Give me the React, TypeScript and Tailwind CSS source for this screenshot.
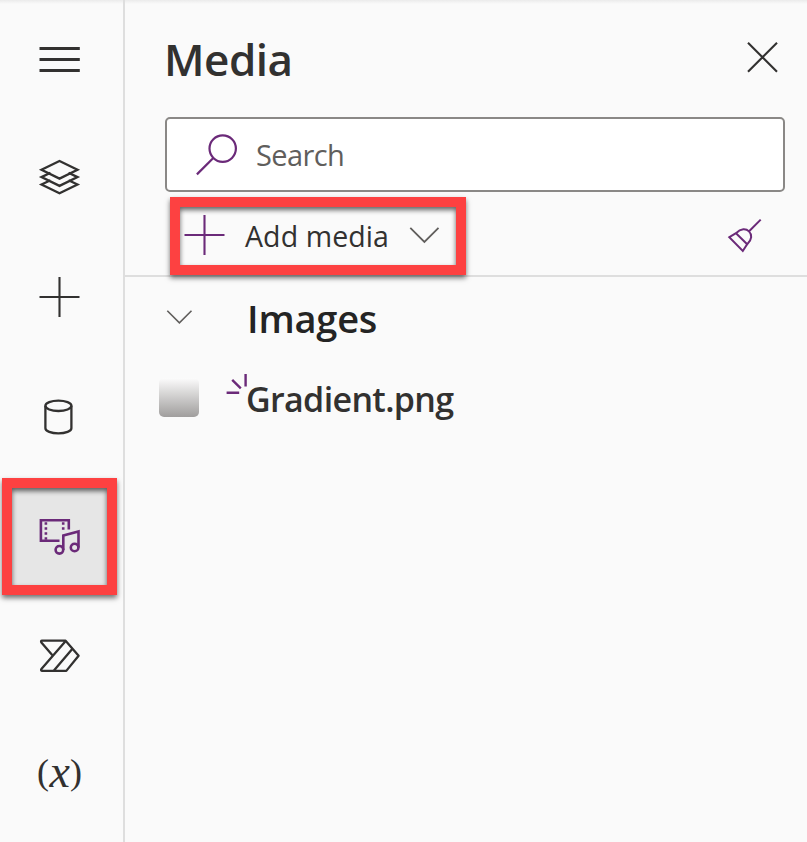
import type { ReactNode } from "react";

const INK = "#323130";
const PURPLE = "#6b2a79";

const highlight =
  "border-[10px] border-[#fd4141] shadow-[0_3px_5px_rgba(0,0,0,0.55),inset_0_3px_5px_rgba(0,0,0,0.6)]";

function RailIcon({ top, height, children }: { top: number; height: number; children: ReactNode }) {
  return (
    <svg
      className="block shrink-0"
      width={123}
      height={height}
      viewBox={`0 ${top} 123 ${height}`}
      fill="none"
      stroke={INK}
      strokeWidth={2.3}
    >
      {children}
    </svg>
  );
}

function Rail() {
  return (
    <nav className="flex w-[125px] shrink-0 flex-col border-r-2 border-[#dedede]">
      <RailIcon top={0} height={118}>
        <path d="M39.5 48.5h40.3M39.5 59.5h40.3M39.5 70.5h40.3" strokeWidth={3} />
      </RailIcon>
      <RailIcon top={118} height={120}>
        <path d="M59.5 161l18 8.8-18 8.8-18-8.8z" />
        <path d="M50.5 172.8l-9 4.3 18 8.8 18-8.8-9-4.3M50.5 180.2l-9 4.3 18 8.8 18-8.8-9-4.3" />
      </RailIcon>
      <RailIcon top={238} height={120}>
        <path d="M39.5 297h40M59.5 277v40" strokeWidth={2.1} />
      </RailIcon>
      <RailIcon top={358} height={120}>
        <ellipse cx="58.4" cy="405.8" rx="13" ry="5.2" />
        <path d="M45.4 405.8v22.4c0 2.9 5.8 5.2 13 5.2s13-2.3 13-5.2v-22.4" />
      </RailIcon>
      <button className={`ml-[2px] flex h-[117px] w-[115px] shrink-0 bg-[#e6e6e6] ${highlight}`}>
        <svg width={95} height={97} viewBox="12 488 95 97" fill="none" stroke={PURPLE} strokeWidth={2.6}>
          <path d="M59.5 540.7H40.9v-20.4h27.9v9.3" />
          <path d="M45.9 522.2v18M63.2 522.2v8" strokeDasharray="2.6 2.4" />
          <circle cx="59.4" cy="549.8" r="3.8" />
          <circle cx="74.6" cy="547.5" r="3.8" />
          <path d="M63.3 550v-14.6l15.2-4v16.2" />
        </svg>
      </button>
      <RailIcon top={595} height={121}>
        <path
          d="M42 640.7h23.6L78.6 655.7 66.3 670.9H42.2c-1 0-1.5-1.1-.8-1.9l24.3-28M52.4 655.2L41.4 642.4c-.7-.8-.3-1.7.6-1.7M53.5 670.9l18.3-21.5"
          strokeLinejoin="round"
        />
      </RailIcon>
      <RailIcon top={716} height={126}>
        <g fill={INK} stroke="none" fontFamily="'Liberation Serif', serif">
          <text x="37" y="784.2" fontSize="36">(</text>
          <text x="49.4" y="787" fontSize="46" fontStyle="italic">x</text>
          <text x="70" y="784.2" fontSize="36">)</text>
        </g>
      </RailIcon>
    </nav>
  );
}

function Header() {
  return (
    <header className="flex h-[117px] justify-between pr-[28px] pl-[39px]">
      <h1 className="mt-[29px] text-[44px] leading-[60px] font-semibold tracking-[-0.5px] text-[#323130]">Media</h1>
      <svg className="mt-[41px]" width={34} height={34} viewBox="745 41 34 34" stroke={INK} strokeWidth={2.1}>
        <path d="M748 42.7l29 29M777 42.7l-29 29" />
      </svg>
    </header>
  );
}

function SearchBox() {
  return (
    <div className="ml-[40px] flex h-[75px] w-[620px] items-center rounded-[5px] border-2 border-[#8a8886] bg-white">
      <svg className="ml-[28px]" width={44} height={44} viewBox="195 133 44 44" fill="none" stroke={PURPLE} strokeWidth={2.2}>
        <circle cx="222.7" cy="148.6" r="13.2" />
        <path d="M213.3 158l-16.4 16.4" />
      </svg>
      <span className="ml-[17px] text-[29px] leading-[40px] tracking-[-0.6px] text-[#605e5c]">Search</span>
    </div>
  );
}

function Toolbar() {
  return (
    <div className="flex h-[85px] border-b-2 border-[#dedede]">
      <button className={`mt-[5px] ml-[45px] flex h-[78px] w-[296px] shrink-0 ${highlight}`}>
        <svg className="ml-[3px] shrink-0" width={43} height={58} viewBox="183 207 43 58" stroke={PURPLE} strokeWidth={2.1}>
          <path d="M184.5 235h40M204.5 215v40" />
        </svg>
        <span className="ml-[19px] w-[145px] text-left text-[28.5px] leading-[58px] tracking-[0.1px] whitespace-nowrap text-[#323130]">
          Add media
        </span>
        <svg className="ml-[18px] shrink-0" width={34} height={58} viewBox="408 207 34 58" fill="none" stroke="#605e5c" strokeWidth={1.8}>
          <path d="M410.3 227.8l14.1 14.1 14.1-14.1" />
        </svg>
      </button>
      <svg className="mt-[24px] ml-[260px]" width={38} height={38} viewBox="726 216 38 38" fill="none" stroke={PURPLE} strokeWidth={2}>
        <path d="M760.7 219.6l-11.6 11.6M736 233.2C741 228.2 746 228.4 749 231.4s3.4 7.8-1.8 12.8L742.8 251l-13.5-13.8zM736 233.2l11.2 11" />
      </svg>
    </div>
  );
}

function MediaList() {
  return (
    <section>
      <div className="flex h-[86px] pl-[40px]">
        <svg className="mt-[31px]" width={30} height={20} viewBox="165 308 30 20" fill="none" stroke="#605e5c" strokeWidth={1.6}>
          <path d="M167.3 310.8l12.1 12.1 12.1-12.1" />
        </svg>
        <h2 className="mt-[16px] ml-[52px] text-[38px] leading-[50px] font-semibold tracking-[-0.2px] text-[#242424]">Images</h2>
      </div>
      <div className="flex h-[70px] pl-[34px]">
        <div className="mt-[15px] h-[39px] w-[40px] rounded-[5px] bg-linear-to-b from-[#fcfcfc] to-[#a09e9d]" />
        <svg className="mt-[9px] ml-[26px]" width={22} height={24} viewBox="225 372 22 24" stroke={PURPLE} strokeWidth={2.4}>
          <path d="M226.6 392.7h12.6M245.6 374v12.6M232.2 379.9l8.6 8.4" />
        </svg>
        <span className="mt-[13px] -ml-[1px] text-[34px] leading-[46px] font-semibold tracking-[-0.65px] text-[#323130]">Gradient.png</span>
      </div>
    </section>
  );
}

export default function App() {
  return (
    <div className="flex h-[842px] w-[807px] overflow-hidden bg-[#fafafa] bg-[linear-gradient(to_bottom,#ebebeb,#fafafa_4px)] font-['Open_Sans','Noto_Sans',sans-serif]">
      <Rail />
      <main className="flex min-w-0 flex-1 flex-col">
        <Header />
        <SearchBox />
        <Toolbar />
        <MediaList />
      </main>
    </div>
  );
}
